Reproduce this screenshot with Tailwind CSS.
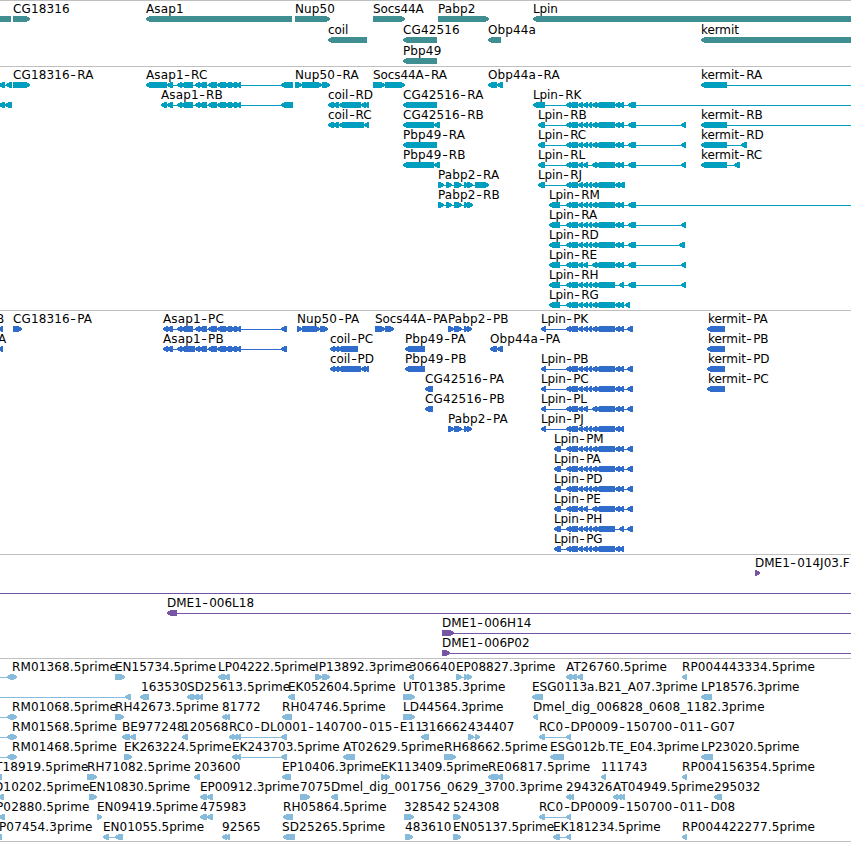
<!DOCTYPE html>
<html lang="en">
<head>
    <meta charset="UTF-8">
    <meta name="viewport" content="width=device-width, initial-scale=1.0">
    <title>Genome Browser</title>
    <script src="https://cdn.jsdelivr.net/npm/@tailwindcss/browser@4"></script>
</head>
<body class="bg-white text-black overflow-hidden font-['DejaVu_Sans',sans-serif]">
    <main class="w-[851px] h-[842px] flex flex-col overflow-hidden border-b border-[#bfbfbf]">
        <section id="genes" class="h-[66px] shrink-0 flex flex-col gap-px pt-px border-t border-[#bfbfbf] text-[#3f8e91]"></section>
        <section id="transcripts" class="h-[244px] shrink-0 flex flex-col pt-px border-t border-[#bfbfbf] text-[#009fc0]"></section>
        <section id="proteins" class="h-[244px] shrink-0 flex flex-col pt-px border-t border-[#bfbfbf] text-[#306ccc]"></section>
        <section id="bacs" class="h-[104px] shrink-0 flex flex-col pt-px border-t border-[#bfbfbf] text-[#7656a4]"></section>
        <section id="ests" class="h-[183px] shrink-0 flex flex-col pt-px border-t border-[#bfbfbf] text-[#86bbdc]"></section>
    </main>

    <script>
        // Feature: [label, label x, strand, blocks, line end (optional), line start (optional)]
        // strand is '<', '>' or '=' (no arrow head)
        const ASAP = '177-182,181-193,195-200,199-207,208-217,217-226,225-232,231-237,236-241';
        const LP = '566-571,569-578,578-583,583-588,588-592,592-597,596-615';
        const LP_SKIP = '566-571,569-578,578-583,583-588,592-597,596-615';
        const TAIL = '615-620,619-624';
        const DIAMOND = [['', 0, '<', '7-13', 8, 0], ['', 0, '>', '11-17']];

        const tracks = {
            genes: [
                [['', 0, '=', '0-11'], ['CG18316', 13, '>', '13-30'], ['Asap1', 146, '<', '146-292'], ['Nup50', 295, '>', '295-330'],
                 ['Socs44A', 373, '>', '373-405'], ['Pabp2', 438, '>', '438-489'], ['Lpin', 533, '<', '533-851']],
                [['coil', 328, '<', '328-367'], ['CG42516', 403, '<', '403-437'], ['Obp44a', 488, '<', '488-501'], ['kermit', 701, '<', '701-851']],
                [['Pbp49', 403, '<', '403-437']]
            ],
            transcripts: [
                [['', 0, '<', '-1-5,6-12'], ['CG18316-RA', 13, '>', '13-30'], ['Asap1-RC', 146, '<', '146-167,167-173,' + ASAP + ',281-293'],
                 ['Nup50-RA', 295, '>', '295-302,302-322,322-330'], ['Socs44A-RA', 373, '>', '373-385,385-405'],
                 ['Obp44a-RA', 488, '<', '488-497,497-503'], ['kermit-RA', 701, '<', '701-727', 851]],
                [['', 0, '<', '-1-5,5-12'], ['Asap1-RB', 161, '<', '161-167,167-173,' + ASAP + ',281-293'], ['coil-RD', 328, '<', '328-334,333-339,339-361,361-366,365-369'],
                 ['CG42516-RA', 403, '<', '403-437'], ['Lpin-RK', 533, '<', '533-545,' + LP + ',' + TAIL + ',628-636', 851]],
                [['coil-RC', 328, '<', '328-334,333-339,339-364,364-369'], ['CG42516-RB', 403, '<', '403-434,434-440'],
                 ['Lpin-RB', 538, '<', '538-545,' + LP + ',' + TAIL + ',628-636,681-686'], ['kermit-RB', 701, '<', '701-727', 851]],
                [['Pbp49-RA', 403, '<', '403-437'], ['Lpin-RC', 538, '<', '538-545,' + LP + ',' + TAIL + ',628-636,681-686'], ['kermit-RD', 701, '<', '701-727,741-747']],
                [['Pbp49-RB', 403, '<', '403-434,434-440'], ['Lpin-RL', 538, '<', '538-545,' + LP_SKIP + ',' + TAIL + ',628-636,681-686'], ['kermit-RC', 701, '<', '701-727,734-740']],
                [['Pabp2-RA', 438, '>', '438-444,446-452,454-462,464-469,467-473,475-489'], ['Lpin-RJ', 538, '<', '538-545,' + LP + ',615-620,619-625']],
                [['Pabp2-RB', 438, '>', '438-444,446-452,454-462,464-469,467-473'], ['Lpin-RM', 549, '<', '549-560,' + LP + ',' + TAIL + ',628-636', 851]],
                [['Lpin-RA', 549, '<', '549-560,' + LP + ',' + TAIL + ',628-636,681-686']],
                [['Lpin-RD', 549, '<', '549-560,' + LP + ',' + TAIL + ',628-636,679-685']],
                [['Lpin-RE', 549, '<', '549-560,' + LP_SKIP + ',' + TAIL + ',628-636,681-686']],
                [['Lpin-RH', 549, '<', '549-560,' + LP + ',619-624,628-636,681-686']],
                [['Lpin-RG', 549, '<', '549-560,' + LP + ',' + TAIL + ',625-630']]
            ],
            proteins: [
                [['B', -4, '<', '-2-3'], ['CG18316-PA', 13, '>', '13-22'], ['Asap1-PC', 163, '<', '163-168,167-173,' + ASAP + ',281-287'],
                 ['Nup50-PA', 297, '>', '297-302,302-320,320-328'], ['Socs44A-PA', 375, '>', '375-385,385-394'], ['Pabp2-PB', 448, '>', '448-454,454-462,464-469,467-472'],
                 ['Lpin-PK', 541, '<', '541-546,' + LP + ',' + TAIL + ',627-633'], ['kermit-PA', 708, '<', '707-725']],
                [['A', -2, '<', '-2-3'], ['Asap1-PB', 163, '<', '163-168,167-173,' + ASAP.replace('181-193', '181-195') + ',281-287'], ['coil-PC', 330, '<', '330-335,334-339,338-358'],
                 ['Pbp49-PA', 405, '<', '405-425'], ['Obp44a-PA', 490, '<', '490-497,497-503'], ['kermit-PB', 708, '<', '707-725']],
                [['coil-PD', 330, '<', '330-335,334-339,338-361,361-366,365-369'], ['Pbp49-PB', 405, '<', '405-425'],
                 ['Lpin-PB', 541, '<', '541-546,' + LP + ',' + TAIL + ',627-633'], ['kermit-PD', 708, '<', '707-725']],
                [['CG42516-PA', 425, '<', '425-433'], ['Lpin-PC', 541, '<', '541-546,' + LP + ',' + TAIL + ',627-633'], ['kermit-PC', 708, '<', '707-725']],
                [['CG42516-PB', 425, '<', '425-433'], ['Lpin-PL', 541, '<', '541-546,' + LP_SKIP + ',' + TAIL + ',627-633']],
                [['Pabp2-PA', 448, '>', '448-454,454-462,464-469,467-472'], ['Lpin-PJ', 541, '<', '541-546,' + LP + ',' + TAIL]],
                [['Lpin-PM', 554, '<', '554-561,' + LP + ',' + TAIL + ',627-633']],
                [['Lpin-PA', 554, '<', '554-561,' + LP + ',' + TAIL + ',627-633']],
                [['Lpin-PD', 554, '<', '554-561,' + LP + ',' + TAIL + ',627-633']],
                [['Lpin-PE', 554, '<', '554-561,' + LP_SKIP + ',' + TAIL + ',627-633']],
                [['Lpin-PH', 554, '<', '554-561,' + LP + ',619-624,627-633']],
                [['Lpin-PG', 554, '<', '554-561,' + LP + ',' + TAIL]]
            ],
            bacs: [
                [['DME1-014J03.F', 755, '>', '755-760']],
                [['', 0, '=', '', 851, 0]],
                [['DME1-006L18', 167, '<', '167-177', 851]],
                [['DME1-006H14', 442, '>', '442-454', 851]],
                [['DME1-006P02', 442, '>', '442-450', 851]]
            ],
            ests: [
                [...DIAMOND, ['RM01368.5prime', 12], ['EN15734.5prime', 115, '>', '115-125'], ['LP04222.5prime', 218, '<', '218-225,224-230'],
                 ['IP13892.3prime', 315, '>', '315-322,322-330'], ['306640', 409, '<', '409-414'], ['EP08827.3prime', 456, '>', '456-462,464-468,467-472'],
                 ['AT26760.5prime', 566, '<', '566-572,571-577,577-583'], ['RP004443334.5prime', 682, '<', '682-687']],
                [['', 0, '<', '125-131', 126, 0], ['163530', 141, '<', '140-149'], ['SD25613.5prime', 187, '<', '187-194,193-199,198-203'],
                 ['EK052604.5prime', 288, '<', '288-295'], ['UT01385.3prime', 403, '>', '403-415'], ['ESG0113a.B21_A07.3prime', 532, '<', '532-543'], ['LP18576.3prime', 701, '<', '701-712']],
                [...DIAMOND, ['RM01068.5prime', 12], ['RH42673.5prime', 115, '>', '115-124'], ['81772', 222, '<', '222-227,226-230'], ['RH04746.5prime', 282, '<', '282-292'],
                 ['LD44564.3prime', 403, '>', '403-415'], ['Dmel_dig_006828_0608_1182.3prime', 533, '<', '533-538']],
                [...DIAMOND, ['RM01568.5prime', 12], ['BE977248', 122, '<', '122-130,130-136'], ['120568', 182, '<', '182-188'],
                 ['RC0-DL0001-140700-015-E11', 229, '<', '229-234,233-238,236-241,281-287'], ['316662', 421, '<', '421-429'], ['434407', 468, '>', '468-474,475-480'],
                 ['RC0-DP0009-150700-011-G07', 539, '<', '539-545,566-571']],
                [...DIAMOND, ['RM01468.5prime', 12], ['EK263224.5prime', 124, '>', '124-132'], ['EK243703.5prime', 232, '<', '232-237,236-241,281-287'],
                 ['AT02629.5prime', 343, '<', '343-355'], ['RH68662.5prime', 444, '>', '444-456'], ['ESG012b.TE_E04.3prime', 550, '<', '550-564'], ['LP23020.5prime', 701, '<', '701-713']],
                [['T18919.5prime', -5, '<', '-2-2'], ['RH71082.5prime', 87, '>', '87-97'], ['203600', 194, '<', '194-200'], ['EP10406.3prime', 282, '<', '282-291'],
                 ['EK113409.5prime', 381, '>', '381-386,385-390'], ['RE06817.5prime', 488, '<', '488-498,497-503'], ['111743', 601, '<', '601-606'], ['RP004156354.5prime', 682, '<', '682-687']],
                [['D10202.5prime', -6, '<', '-2-4'], ['EN10830.5prime', 89, '>', '89-97'], ['EP00912.3prime', 200, '<', '200-207,207-213'], ['7075', 300, '>', '300-310'],
                 ['Dmel_dig_001756_0629_3700.3prime', 331, '<', '331-338'], ['294326', 566, '<', '566-571,569-574'], ['AT04949.5prime', 613, '<', '613-618,617-622,620-625'], ['295032', 714, '<', '714-722']],
                [['P02880.5prime', -4, '<', '-1-5'], ['EN09419.5prime', 97, '>', '97-102'], ['475983', 200, '<', '200-207,207-213'], ['RH05864.5prime', 283, '<', '283-293'],
                 ['328542', 404, '>', '404-414'], ['524308', 453, '>', '453-461'], ['RC0-DP0009-150700-011-D08', 539, '<', '539-545,566-571']],
                [['P07454.3prime', -1, '<', '-2-2'], ['EN01055.5prime', 103, '<', '103-109,115-123'], ['92565', 222, '<', '222-227,226-230'], ['SD25265.5prime', 282, '<', '283-295'],
                 ['483610', 405, '>', '405-413'], ['EN05137.5prime', 453, '>', '453-461'], ['EK181234.5prime', 553, '<', '553-560,566-571'], ['RP004422277.5prime', 682, '<', '682-687']]
            ]
        };

        // Block with a blunt arrow head of up to 6px
        function block(a, b, strand) {
            const h = strand === '=' ? 0 : Math.min(b - a, 6);
            const k = h > 5 ? 2 : 1;
            if (strand === '>') return `<polygon points="${a},0 ${b - h + k},0 ${b},2 ${b},4 ${b - h + k},6 ${a},6"/>`;
            if (strand === '=') return `<rect x="${a}" y="0" width="${b - a}" height="6"/>`;
            return `<polygon points="${b},0 ${a + h - k},0 ${a},2 ${a},4 ${a + h - k},6 ${b},6"/>`;
        }

        function shapes([, , strand, list, end, start]) {
            if (!strand) return '';
            const blocks = (list.match(/-?\d+-\d+/g) || []).map(s => s.match(/^(-?\d+)-(\d+)$/).slice(1).map(Number));
            const from = start ?? blocks[0][0];
            const to = end ?? blocks[blocks.length - 1][1];
            const line = strand === '=' && blocks.length ? '' : `<rect x="${from}" y="3" width="${to - from}" height="1"/>`;
            return line + blocks.map(([a, b]) => block(a, b, strand)).join('');
        }

        function label([name, x]) {
            const tracking = /^(Lpin|coil|Socs|kermit)/.test(name) ? 'tracking-[-0.1px]' : /^(E|LP|LD|DME)/.test(name) ? 'tracking-[0px]' : 'tracking-[0.13px]';
            const text = name.replace(/-/g, '<span class="inline-block w-[7.4px] text-center"><span class="inline-block scale-x-130">-</span></span>');
            return `<span class="absolute top-0 whitespace-nowrap ${tracking}" style="left:${x}px">${text}</span>`;
        }

        for (const [id, rows] of Object.entries(tracks)) {
            document.getElementById(id).innerHTML = rows.map(row => `
                <div class="h-5 shrink-0 flex flex-col">
                    <div class="relative h-3.5 text-black text-[12px] leading-[14px]">
                        ${row.filter(f => f[0]).map(label).join('')}
                    </div>
                    <svg class="block w-[851px] h-1.5 shrink-0" viewBox="0 0 851 6" fill="currentColor" shape-rendering="crispEdges">${row.map(shapes).join('')}</svg>
                </div>`).join('');
        }
    </script>
</body>
</html>
